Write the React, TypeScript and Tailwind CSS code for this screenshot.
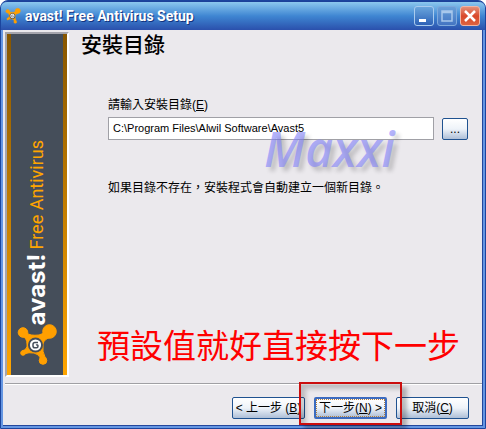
import React, { useState } from "react";

const uiFont = "font-['Liberation_Sans','Noto_Sans_CJK_TC',sans-serif]";

function Splat({ className }: { className: string }) {
  return (
    <svg viewBox="0 0 40 42" className={className} aria-hidden="true">
      <g fill="#ff9f00" stroke="#ff9f00">
        <path d="M10 9 Q13 12 22 11 Q26 10 27 8 L34 13 Q27 15 26 20 Q25 28 28 33 L24 35 Q22 30 17 29 Q12 28 7 30 L5 27 Q11 25 10 20 Q10 14 5 12Z" strokeWidth="1" />
        <circle cx="6" cy="8.500" r="4.800" />
        <circle cx="32.500" cy="7.500" r="6.800" />
        <circle cx="6" cy="29" r="2.300" />
        <circle cx="26" cy="36.500" r="3.800" />
      </g>
      <circle cx="18.500" cy="21" r="7.500" fill="#454e5a" />
      <circle cx="18.500" cy="21" r="5.600" fill="#fff" />
      <path d="M21 18.500 H18 Q16 18.500 16 20.500 V22 Q16 23.800 18 23.800 H19.500 Q21 23.800 21 22 Q21 20.500 19 21" stroke="#454e5a" strokeWidth="1.500" fill="none" />
    </svg>
  );
}

const captionBase = "flex h-5 w-5 items-center justify-center rounded-[3px] border";

function TitleBar() {
  return (
    <header className="flex h-[29px] shrink-0 items-center justify-between rounded-t-md border-t border-[#1c4199] bg-linear-to-b from-[#8cc8ee] via-[#3f86d2] to-[#2b50ac] pr-[5px] pl-[4px]">
      <div className="flex items-center gap-1">
        <Splat className="h-4 w-4" />
        <h1 className="font-['Roboto',sans-serif] text-[14px] leading-4 font-bold whitespace-nowrap text-white [text-shadow:1px_1px_0_#12337e]">
          avast! Free Antivirus Setup
        </h1>
      </div>
      <div className="flex gap-[3px]">
        <button aria-label="Minimize" className={`${captionBase} border-[#a9cbee] bg-linear-to-b from-[#6aa5dc] to-[#2e62b7]`}>
          <svg viewBox="0 0 18 18" className="h-[18px] w-[18px]"><path d="M4 12h7v3H4z" fill="#fff" /></svg>
        </button>
        <button aria-label="Maximize" disabled className={`${captionBase} border-[#7fa9dc] bg-linear-to-b from-[#69a0d9] to-[#4474c2]`}>
          <svg viewBox="0 0 18 18" className="h-[18px] w-[18px]"><path d="M4 4h10v10H4z M4 5.500h10" fill="none" stroke="#a9c8ec" strokeWidth="1.500" /></svg>
        </button>
        <button aria-label="Close" className={`${captionBase} border-[#f0b5a4] bg-linear-to-b from-[#e38f78] via-[#d9482a] to-[#de6240]`}>
          <svg viewBox="0 0 18 18" className="h-[18px] w-[18px]"><path d="M4 4l10 10M14 4L4 14" stroke="#fff" strokeWidth="2.500" /></svg>
        </button>
      </div>
    </header>
  );
}

function Banner() {
  return (
    <aside className="flex w-16 shrink-0 border-2 border-[#a5a5ad] border-r-white border-b-white">
      <div className="w-1 bg-linear-to-b from-[#875600] to-[#ffa500]" />
      <div className="flex flex-1 flex-col items-center justify-end bg-[#454e5a] pb-[9px]">
        <p className="flex rotate-180 items-center gap-1 leading-6 whitespace-nowrap [writing-mode:vertical-rl]">
          <span className="font-['Inter',sans-serif] text-[24px] font-bold text-white">avast!</span>
          <span className="font-['Roboto',sans-serif] text-[18px] text-[#ffa500]">Free Antivirus</span>
        </p>
        <Splat className="-mt-[2px] h-[42px] w-10" />
      </div>
      <div className="w-1 bg-linear-to-b from-[#875600] to-[#ffa500]" />
    </aside>
  );
}

const buttonBase =
  "h-[22px] rounded-[2px] border border-[#1f5290] bg-linear-to-b from-white via-[#eef3f9] to-[#aebfd7] text-[12px] leading-5 whitespace-nowrap text-black";

export default function App() {
  const [path, setPath] = useState("C:\\Program Files\\Alwil Software\\Avast5");
  return (
    <div className={`flex min-h-screen flex-col bg-white text-black ${uiFont}`}>
      <div className="flex flex-1 flex-col rounded-t-lg border border-[#1c459e] bg-[#6596e2]">
        <TitleBar />
        <div className="mx-[2px] mb-[2px] flex flex-1 flex-col border-r border-b border-[#24479c] bg-[#ebe9ed] pl-[2px]">
          <div className="mt-[2px] flex flex-1">
            <Banner />
            <main className="flex flex-1 flex-col pt-px pl-3">
              <h2 className="text-[21px] leading-6 font-medium">安裝目錄</h2>
              <div className="mt-9 pr-[14px] pl-[27px]">
                <label htmlFor="path" className="block text-[12px] leading-6">
                  請輸入安裝目錄(<u>E</u>)
                </label>
                <div className="relative flex items-center gap-2">
                  <input
                    id="path"
                    value={path}
                    onChange={(e) => setPath(e.target.value)}
                    className="h-[23px] min-w-0 flex-1 border border-[#a0a0a6] bg-white px-1 pb-[2px] text-[11px] outline-none"
                  />
                  <button aria-label="Browse" className={`${buttonBase} w-[26px]`}>...</button>
                  <span className="pointer-events-none absolute top-2 left-[156px] font-['Open_Sans',sans-serif] text-[48px] leading-[48px] font-semibold text-[#8080f8]/60 italic [text-shadow:4px_4px_4px_#00000030]">
                    Maxxi
                  </span>
                </div>
                <p className="mt-9 text-[12px] leading-6">如果目錄不存在，安裝程式會自動建立一個新目錄。</p>
              </div>
              <p className="mt-auto mb-[6px] pl-4 font-['Liberation_Serif','Noto_Sans_CJK_TC',serif] text-[33px] leading-[48px] whitespace-nowrap text-[#ff0000]">
                預設值就好直接按下一步
              </p>
            </main>
          </div>
          <hr className="mt-[6px] border-t border-b border-[#a0a0a4] border-b-white" />
          <footer className="flex justify-end gap-[9px] pt-3 pr-[13px] pb-[6px]">
            <button className={`${buttonBase} w-[73px]`}>&lt; 上一步 (<u>B</u>)</button>
            <div className="relative flex">
              <button className="h-[22px] w-[73px] rounded-[2px] border-2 border-[#3b6bc0] bg-linear-to-b from-white via-[#eef3f9] to-[#aebfd7] text-[12px] whitespace-nowrap">
                <span className="block border border-dotted border-[#b08040] leading-4">下一步(<u>N</u>) &gt;</span>
              </button>
              <div className="pointer-events-none absolute -top-[15px] -right-[15px] -bottom-[6px] -left-[15px] border-2 border-[#cb0e0e] shadow-[5px_5px_4px_#00000040,inset_5px_5px_4px_#00000030]" />
            </div>
            <button className={`${buttonBase} w-[73px]`}>取消(<u>C</u>)</button>
          </footer>
        </div>
      </div>
    </div>
  );
}
